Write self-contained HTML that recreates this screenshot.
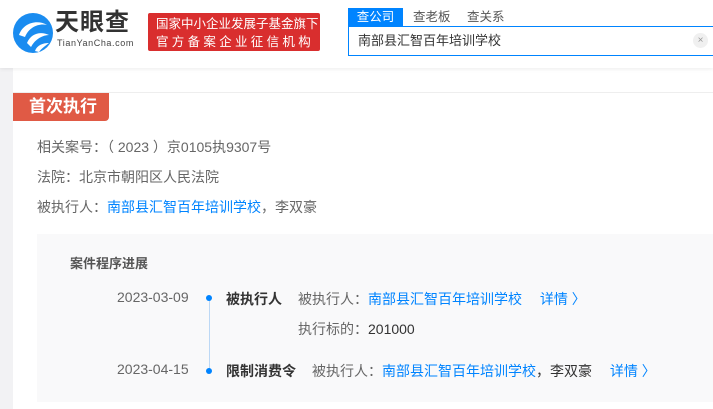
<!DOCTYPE html>
<html><head><meta charset="utf-8"><style>
*{margin:0;padding:0;box-sizing:border-box}
body{width:713px;height:409px;overflow:hidden;background:#fff;font-family:"Liberation Sans","Noto Sans CJK SC",sans-serif;position:relative;color:#333}
.a{position:absolute;white-space:nowrap}
.hdr{position:absolute;left:0;top:0;width:713px;height:68px;background:#fff;box-shadow:0 1px 4px rgba(0,0,0,.08);z-index:2}
.side{position:absolute;left:0;top:68px;width:13px;height:341px;background:#f2f2f4}
.blue{color:#0084ff}
.l{font-size:14px;color:#666}
</style></head><body>
<div class="hdr">
<svg class="a" style="left:13px;top:13px" width="40" height="40" viewBox="0 0 40 40">
<circle cx="20" cy="20" r="20" fill="#1a8cf0"/>
<path d="M6 22 C10 10 24 6 34 12 C26 10 16 14 12 24 Z" fill="#fff"/>
<path d="M14 30 C18 20 28 18 36 22 C30 22 22 26 18 34 Z" fill="#fff"/>
<path d="M22 38 C24 32 30 30 36 30 C32 33 28 36 26 39Z" fill="#fff"/>
</svg>
<div class="a" style="left:55px;top:9px;font-size:24px;line-height:28px;font-weight:bold;color:#333;letter-spacing:1px">天眼查</div>
<div class="a" style="left:57px;top:38px;font-size:9px;line-height:10px;color:#444;letter-spacing:.6px">TianYanCha.com</div>
<div class="a" style="left:148px;top:13px;width:172px;height:38px;background:#d92e2e;border-radius:2px;color:#fff;font-size:12.5px;line-height:18px;padding:2px 0 0 8px">国家中小企业发展子基金旗下<br><span style="letter-spacing:3.3px">官方备案企业征信机构</span></div>
<div class="a" style="left:348px;top:8px;width:55px;height:18px;background:#0084ff;color:#fff;font-size:12.5px;line-height:18px;text-align:center">查公司</div>
<div class="a" style="left:413px;top:8px;font-size:12.5px;line-height:18px;color:#555">查老板</div>
<div class="a" style="left:467px;top:8px;font-size:12.5px;line-height:18px;color:#555">查关系</div>
<div class="a" style="left:348px;top:26px;width:370px;height:30px;border:1px solid #0084ff;font-size:13px;line-height:28px;padding-left:9px;color:#333">南部县汇智百年培训学校</div>
<div class="a" style="left:693px;top:33px;width:15px;height:15px;border-radius:50%;background:#f0f0f0;color:#999;font-size:10px;line-height:15px;text-align:center">×</div>
</div>
<div class="side"></div>
<div class="a" style="left:13px;top:92px;width:700px;height:1px;background:#eee"></div>
<div class="a" style="left:13px;top:93px;width:96px;height:28px;background:#e05a45;border-radius:0 0 4px 0;color:#fff;font-size:17px;font-weight:bold;line-height:28px;padding-left:16px">首次执行</div>
<div class="a l" style="left:37px;top:137px">相关案号：（ 2023 ）京0105执9307号</div>
<div class="a l" style="left:37px;top:167px">法院：北京市朝阳区人民法院</div>
<div class="a l" style="left:37px;top:197px">被执行人：<span class="blue">南部县汇智百年培训学校</span>，李双豪</div>
<div class="a" style="left:37px;top:234px;width:676px;height:168px;background:#f9f9fa"></div>
<div class="a" style="left:70px;top:253px;font-size:13px;font-weight:bold;color:#555">案件程序进展</div>
<div class="a" style="left:209px;top:298px;width:1px;height:74px;background:#bcd8f5"></div>
<div class="a" style="left:206px;top:295px;width:6px;height:6px;border-radius:50%;background:#0084ff"></div>
<div class="a" style="left:206px;top:368px;width:6px;height:6px;border-radius:50%;background:#0084ff"></div>
<div class="a l" style="left:117px;top:289px">2023-03-09</div>
<div class="a" style="left:226px;top:289px;font-size:14px;font-weight:bold;color:#333">被执行人</div>
<div class="a l" style="left:298px;top:289px">被执行人：<span class="blue">南部县汇智百年培训学校</span>　 <span class="blue">详情 〉</span></div>
<div class="a l" style="left:298px;top:319px">执行标的：<span style="color:#333">201000</span></div>
<div class="a l" style="left:117px;top:361px">2023-04-15</div>
<div class="a" style="left:226px;top:361px;font-size:14px;font-weight:bold;color:#333">限制消费令</div>
<div class="a l" style="left:312px;top:361px">被执行人：<span class="blue">南部县汇智百年培训学校</span><span style="color:#333">，李双豪</span>　 <span class="blue">详情 〉</span></div>
</body></html>
